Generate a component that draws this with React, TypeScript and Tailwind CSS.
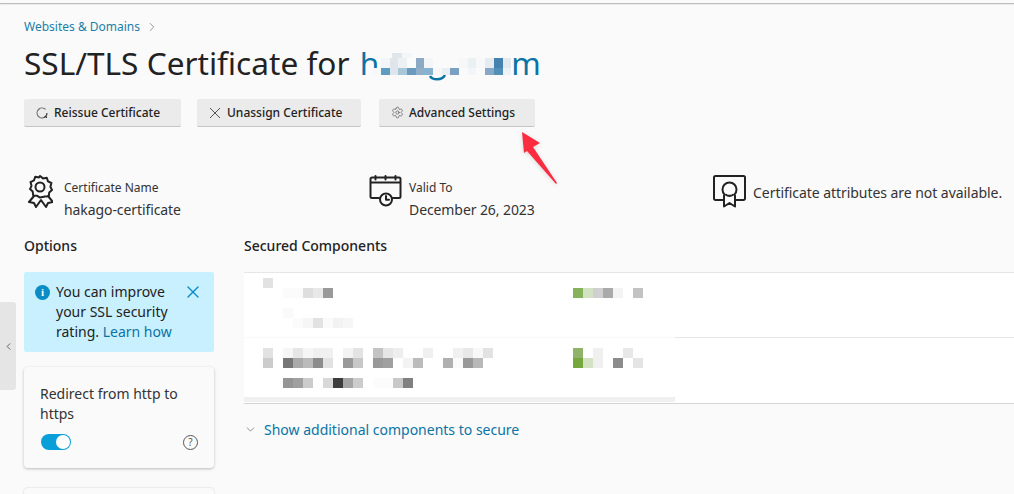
import { ChevronDown, ChevronLeft, ChevronRight, Settings, X } from "lucide-react";

type Cell = string | null;

// pixelated (blurred-out) bits of the screenshot, one colour per 10px cell
function Mosaic({ rows, cell = "w-[10px] h-[10px]" }: { rows: Cell[][]; cell?: string }) {
  return (
    <div className="flex flex-col">
      {rows.map((row, r) => (
        <div key={r} className="flex">
          {row.map((c, i) => (
            <div key={i} className={cell} style={{ background: c ?? "transparent" }} />
          ))}
        </div>
      ))}
    </div>
  );
}

function ReissueIcon() {
  return (
    <svg width="12" height="12" viewBox="0 0 12 12" fill="none" stroke="#666" strokeWidth="1.100">
      <path d="M9.600 2.400A5 5 0 1 0 9 10" />
      <path d="M11 6a5 5 0 0 1-.9 2.800M8.300 10.500l1.800-1.700.4 2.200" stroke="#333" />
    </svg>
  );
}

function CrossIcon() {
  return (
    <svg width="12" height="12" viewBox="0 0 12 12" fill="none" stroke="#555" strokeWidth="1">
      <path d="M1 1l10 10M11 1L1 11" />
    </svg>
  );
}

function BadgeIcon() {
  return (
    <svg width="26" height="34" viewBox="0 0 26 34" fill="none" stroke="#222" strokeWidth="2" strokeLinejoin="round" strokeLinecap="round">
      <path d="M13 1l3 2.400 3.700-.7 1.300 3.600 3.400 1.700-1 3.700 1.600 3.300-2.800 2.500-.4 3.800-3.800.3L13 22.600l-3.100-1.900-3.700-.3-.5-3.800-2.700-2.500 1.500-3.300-1-3.700L7 5.300l1.300-3.600 3.700.7z" />
      <circle cx="13" cy="12" r="4.500" />
      <path d="M7 21l-5 6 5 1 2 4 5-7 5 7 2-4 5-1-5-6" />
    </svg>
  );
}

function CalendarClockIcon() {
  return (
    <svg width="33" height="32" viewBox="0 0 33 32" fill="none" stroke="#222" strokeWidth="2" strokeLinecap="round" strokeLinejoin="round">
      <path d="M10 23H3a1.500 1.500 0 0 1-1.500-1.500V4A1.500 1.500 0 0 1 3 2.500h27A1.500 1.500 0 0 1 31.500 4v17.500A1.500 1.500 0 0 1 30 23h-6" />
      <path d="M2 7.500h29M6.500 1v3.500M16.500 1v3.500M26.500 1v3.500" />
      <circle cx="17" cy="24.500" r="6" />
      <path d="M17 21v3.800h3" />
    </svg>
  );
}

function CertIcon() {
  return (
    <svg width="33" height="33" viewBox="0 0 33 33" fill="none" stroke="#222" strokeWidth="2" strokeLinejoin="round">
      <path d="M10 25H2.500A1.500 1.500 0 0 1 1 23.500V2.500A1.500 1.500 0 0 1 2.500 1h28A1.500 1.500 0 0 1 32 2.500v21a1.500 1.500 0 0 1-1.500 1.500H23" />
      <circle cx="16.500" cy="14.500" r="7" />
      <path d="M11 20v11.500l5.500-3.500 5.500 3.500V20" fill="#fafafa" />
      <path d="M12.500 19.500a7 7 0 0 0 8 0" />
    </svg>
  );
}

function Btn({ icon, label, className }: { icon: React.ReactNode; label: string; className: string }) {
  return (
    <button className={`flex h-[28px] items-center gap-[6px] rounded-[2px] border-b border-[#c4c4c4] bg-[#ebebeb] pl-[12px] text-[12px] font-medium text-[#222] ${className}`}>
      {icon}
      {label}
    </button>
  );
}

function Summary({ icon, label, value, className }: { icon: React.ReactNode; label: string; value: string; className: string }) {
  return (
    <div className={`flex items-start ${className}`}>
      {icon}
      <div className="flex flex-col pt-[5px]">
        <span className="text-[12px] leading-[16px] text-[#333]">{label}</span>
        <span className="mt-[4px] text-[14px] leading-[19px] tracking-[-0.09px] text-[#333]">{value}</span>
      </div>
    </div>
  );
}

const W = "#ffffff";
const titleRow1: Cell[] = [null, null, "#e0e6ea", "#f3f5f7"];
const titleRow2: Cell[] = [null, "#f3f6f8", "#dfe5ea", "#eef1f4", "#fafbfb", "#8daac4", "#f3f5f7", null, null, null, "#f5f7f8", "#ebf0f3", "#f6f8f9", "#e5ebf0", "#4682b0", "#e3e9ed"];
const titleRow3: Cell[] = ["#f6f8f9", "#5e9cc2", "#dde6ec", "#a8c8da", "#6b9ac0", "#8fb0c8", "#85b3d0", "#f5f7f9", "#e8eef2", "#7ca0c0", "#fafafa", "#f3f6f8", "#fafafa", "#85a8c8", "#4f8fb8", "#edf2f6"];

const compA1: Cell[] = ["#e2e2e2"];
const compA2: Cell[] = [W, W, "#fbfbfb", "#fbfbfb", "#dedede", "#e8e8e8", "#999999"];
const compA3: Cell[] = [W, W, "#fafafa"];
const compA4: Cell[] = [W, W, W, "#fbfbfb", "#f6f6f6", "#e2e2e2", "#fafafa", "#f2f2f2", "#f6f6f6"];
const statusA: Cell[] = ["#85b35a", "#d4e2c4", "#d0d0d0", "#aaaaaa", "#f3f3f3", W, "#c3c3c3"];

const compB1: Cell[] = ["#e2e2e2", W, "#f6f6f6", "#e6e6e6", "#f6f6f6", "#f0f0f0", "#f0f0f0", W, "#f3f3f3", "#e3e3e3", W, "#c3c3c3", "#e6e6e6", "#eeeeee", W, W, "#f0f0f0", W, W, "#f0f0f0", "#e8e8e8", "#f8f8f8", "#e2e2e2"];
const compB2: Cell[] = ["#cccccc", W, "#777777", "#aaaaaa", "#bbbbbb", "#8c8c8c", "#e2e2e2", W, "#999999", "#c8c8c8", W, "#999999", "#a0a0a0", W, "#f3f3f3", "#bbbbbb", W, W, "#b0b0b0", "#fafafa", "#999999", "#b8b8b8"];
const compB3: Cell[] = [W, W, "#959595", "#a0a0a0", "#cccccc", W, "#d8d8d8", "#3c3c3c", "#a5a5a5", "#cccccc", W, "#fcfcfc", "#fcfcfc", "#c8c8c8", "#808080"];
const statusB1: Cell[] = ["#8fb368", W, "#f0f0f0", W, W, "#e8e8e8"];
const statusB2: Cell[] = ["#74a83c", "#d4e2c4", "#f0f0f0", W, "#8c8c8c", W, "#e4e4e4"];

export default function App() {
  return (
    <div className="relative h-[494px] w-[1014px] overflow-hidden bg-[#fafafa] font-['Noto_Sans','Open_Sans',sans-serif]">
      <div className="mt-[3px] h-[1px] bg-[#bdbdbd] shadow-[0_1px_1px_rgba(0,0,0,0.08)]" />

      <div className="px-[24px]">
        <div className="mt-[14px] flex h-[18px] items-center gap-[5px] text-[12px] text-[#1b7fa8]">
          <span>Websites &amp; Domains</span>
          <ChevronRight size={14} strokeWidth={1} className="text-[#555]" />
        </div>

        <h1 className="mt-[5px] flex h-[44px] items-start text-[31.6px] leading-[44px] text-[#222]">
          <span>SSL/TLS Certificate for&nbsp;</span>
          <span className="ml-[2px] text-[#0a74a5]">h</span>
          <div className="relative ml-[-7px] mt-[12px] h-[30px] w-[139px]">
            <Mosaic rows={[titleRow1]} cell="h-[5px] w-[10px]" />
            <Mosaic rows={[titleRow2]} />
            <Mosaic rows={[titleRow3]} cell="h-[7px] w-[10px]" />
            <svg className="absolute left-[57px] top-[22px]" width="18" height="8" viewBox="0 0 18 8" fill="none" stroke="#0a74a5" strokeWidth="2.500">
              <path d="M1 1c2 4 12 5 15-1" />
            </svg>
          </div>
          <span className="relative text-[#0a74a5]">m</span>
        </h1>

        <div className="mt-[14px] flex">
          <Btn className="w-[157px]" icon={<ReissueIcon />} label="Reissue Certificate" />
          <Btn className="ml-[16px] w-[164px]" icon={<CrossIcon />} label="Unassign Certificate" />
          <Btn className="ml-[18px] w-[156px]" icon={<Settings size={13} strokeWidth={1.3} className="-mr-[1px] text-[#555]" />} label="Advanced Settings" />
        </div>

        <div className="mt-[48px] grid h-[53px] grid-cols-[344px_344px_1fr]">
          <Summary className="gap-[11px] pl-[3px]" icon={<BadgeIcon />} label="Certificate Name" value="hakago-certificate" />
          <Summary className="gap-[7px] pl-[1px]" icon={<CalendarClockIcon />} label="Valid To" value="December 26, 2023" />
          <div className="flex items-start gap-[7px] pl-[1px]">
            <CertIcon />
            <span className="mt-[8px] whitespace-nowrap text-[14px] leading-[19px] tracking-[-0.05px] text-[#333]">Certificate attributes are not available.</span>
          </div>
        </div>
      </div>

      <div className="mt-[8px] flex pl-[24px]">
        <aside className="w-[190px]">
          <h2 className="h-[20px] text-[14px] font-medium leading-[20px] text-[#222]">Options</h2>
          <div className="mt-[16px] flex h-[80px] items-start rounded-[2px] bg-[#c9f0ff] pl-[11px] pr-[11px] pt-[10px]">
            <div className="mt-[3px] flex h-[15px] w-[15px] shrink-0 items-center justify-center rounded-full bg-[#0a8cc6] font-['Liberation_Serif',serif] text-[11px] font-bold text-white">i</div>
            <p className="ml-[6px] w-[118px] text-[14px] leading-[20px] text-[#222]">
              You can improve your SSL security rating. <span className="text-[#0a74a5]">Learn how</span>
            </p>
            <X size={20} strokeWidth={1.6} className="ml-auto shrink-0 text-[#0a8cc6]" />
          </div>
          <div className="mt-[15px] h-[101px] rounded-[4px] bg-[#fafafa] px-[16px] pt-[17px] shadow-[0_1px_3px_rgba(0,0,0,0.25)]">
            <p className="text-[14px] leading-[20px] text-[#333]">Redirect from http to https</p>
            <div className="mt-[9px] flex items-center justify-between pl-[1px]">
              <div className="flex h-[16px] w-[30px] items-center justify-end rounded-full bg-[#0a9fd8] pr-[1px]">
                <div className="h-[14px] w-[14px] rounded-full bg-white" />
              </div>
              <div className="mt-[2px] flex h-[15px] w-[15px] items-center justify-center rounded-full border border-[#555] text-[10px] text-[#555]">?</div>
            </div>
          </div>
          <div className="mt-[20px] h-[60px] rounded-[4px] bg-[#fafafa] shadow-[0_0_2px_rgba(0,0,0,0.2)]" />
        </aside>

        <section className="ml-[30px] flex-1">
          <h2 className="h-[20px] text-[14px] font-medium leading-[20px] text-[#222]">Secured Components</h2>
          <div className="mt-[16px] h-[132px] border-b border-t border-b-[#d4d4d4] border-t-[#e6e6e6] bg-white">
            <div className="flex h-[64px] pl-[19px] pt-[5px]">
              <div className="w-[310px]">
                <Mosaic rows={[compA1, compA2, [null]]} />
                <Mosaic rows={[compA3, compA4]} />
              </div>
              <div className="pt-[10px]">
                <Mosaic rows={[statusA]} />
              </div>
            </div>
            <div className="flex h-[1px]">
              <div className="w-[431px] bg-[#f9f9f9]" />
              <div className="flex-1 bg-[#e6e6e6]" />
            </div>
            <div className="flex h-[59px] pl-[19px] pt-[10px]">
              <div className="w-[310px]">
                <Mosaic rows={[compB1, compB2, [null], compB3]} />
              </div>
              <Mosaic rows={[statusB1, statusB2]} />
            </div>
            <div className="h-[5px] w-[431px] bg-[#f0f0f0]" />
          </div>
          <div className="mt-[15px] flex h-[20px] items-center gap-[7px] text-[14px] text-[#0a74a5]">
            <ChevronDown size={13} strokeWidth={1.5} className="text-[#777]" />
            <span>Show additional components to secure</span>
          </div>
        </section>
      </div>

      {/* collapsed side panel tab */}
      <div className="absolute left-0 top-[302px] flex h-[88px] w-[16px] items-center justify-center rounded-r-[3px] bg-[#e5e5e5]">
        <ChevronLeft size={11} strokeWidth={1.6} className="text-[#333]" />
      </div>

      {/* annotation arrow */}
      <svg className="absolute left-[515px] top-[125px] drop-shadow-[0_1px_2px_rgba(0,0,0,0.15)]" width="50" height="65" viewBox="515 125 50 65">
        <polygon points="522,132 540,143 533,147 557,183 556,184 527,151 524,153" fill="#fb2b40" />
      </svg>
    </div>
  );
}
